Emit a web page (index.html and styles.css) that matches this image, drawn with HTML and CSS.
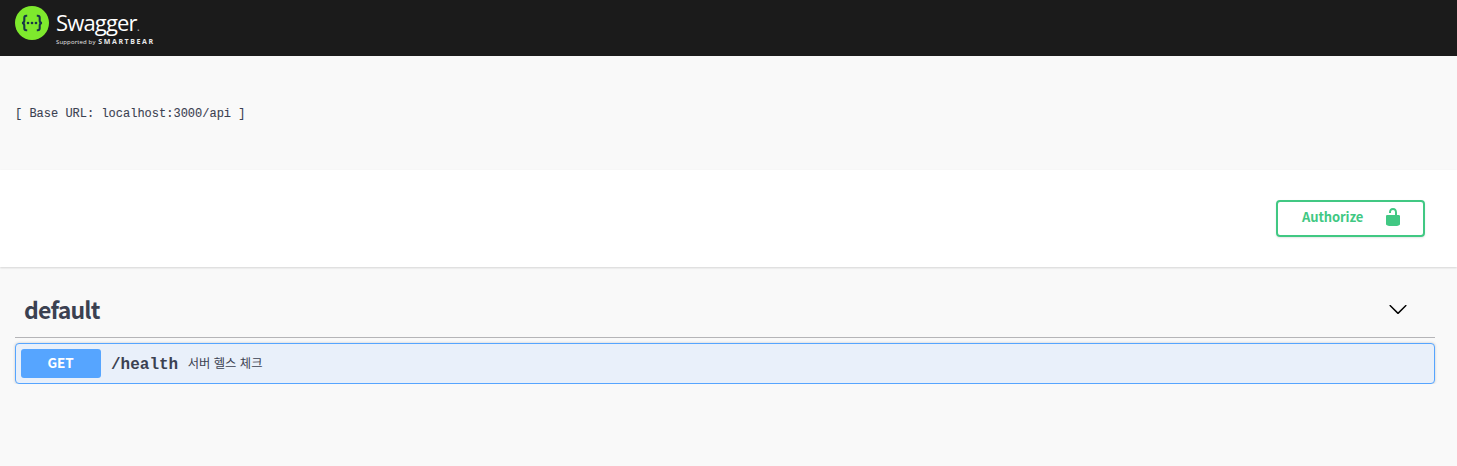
FILE: index.html
```html
<!DOCTYPE html>
<html lang="ko">
<head>
<meta charset="utf-8">
<title>Swagger UI</title>
<link rel="stylesheet" href="styles.css">
</head>
<body>
<header class="topbar">
  <svg class="logo-mark" viewBox="0 0 34 34">
    <circle cx="17" cy="17" r="17" fill="#7ee92d"/>
    <g fill="none" stroke="#173647" stroke-width="2.100">
      <path d="M12.200 9.700h-.900c-1.400 0-2 .7-2 2v2.700c0 1.600-.7 2.400-2.200 2.600 1.500.2 2.200 1 2.200 2.600v2.700c0 1.300.6 2 2 2h.900"/>
      <path d="M21.800 9.700h.900c1.400 0 2 .7 2 2v2.700c0 1.600.7 2.400 2.200 2.600-1.500.2-2.200 1-2.200 2.600v2.700c0 1.300-.6 2-2 2h-.900"/>
    </g>
    <g fill="#173647"><circle cx="13" cy="17" r="1.300"/><circle cx="17" cy="17" r="1.300"/><circle cx="21" cy="17" r="1.300"/></g>
  </svg>
  <div class="brand">
    <div class="brand-name">Swagger<span class="brand-dot">.</span></div>
    <div class="brand-sub">Supported by <b>SMARTBEAR</b></div>
  </div>
</header>
<section class="info"><pre class="base-url">[ Base URL: localhost:3000/api ]</pre></section>
<section class="schemes">
  <button class="authorize"><span>Authorize</span>
    <svg class="lock" viewBox="0 0 20 20"><path fill="#41c883" d="M15.800 8H14V5.600C14 2.703 12.665 1 10 1 7.334 1 6 2.703 6 5.600V6h2v-.801C8 3.754 8.797 3 10 3c1.203 0 2 .754 2 2.199V8H4c-.553 0-1 .646-1 1.199V17c0 .549.428 1.139.951 1.307l1.197.387C5.672 18.861 6.550 19 7.100 19h5.800c.549 0 1.428-.139 1.951-.307l1.196-.387c.524-.167.953-.757.953-1.306V9.199C17 8.646 16.352 8 15.800 8z"/></svg>
  </button>
</section>
<main class="operations">
  <div class="tag"><h3 class="tag-name">default</h3>
    <svg class="arrow" viewBox="0 0 20 20"><path d="M17.418 6.109c.272-.268.709-.268.979 0s.271.701 0 .969l-7.908 7.830c-.27.268-.707.268-.979 0l-7.908-7.830c-.27-.268-.27-.701 0-.969s.709-.268.979 0L10 13.250z"/></svg>
  </div>
  <div class="operation">
    <span class="method">GET</span><span class="path">/health</span><span class="summary">서버 헬스 체크</span>
  </div>
</main>
</body>
</html>
```
FILE: styles.css
```css
* { box-sizing: border-box; }
body { margin: 0; background: #f9f9f9; color: #3b4151; font-family: "Noto Sans CJK KR", sans-serif; }
.topbar { height: 56px; background: #1b1b1b; display: flex; align-items: flex-start; padding: 6px 15px; }
.logo-mark { width: 34px; height: 34px; }
.brand { margin-left: 7px; color: #fff; white-space: nowrap; font-family: "Open Sans", sans-serif; }
.brand-name { font-size: 22px; line-height: 30px; letter-spacing: -0.85px; margin-top: 1px; }
.brand-dot { font-size: 12px; color: #aaa; margin-left: 0; }
.brand-sub { font-size: 6px; line-height: 8px; letter-spacing: 0.15px; margin-top: -4px; color: #e8e8e8; }
.brand-sub b { font-size: 7px; font-weight: 700; letter-spacing: 1.600px; margin-left: 1px; }
.info { height: 114px; padding: 50px 15px 0; }
.base-url { margin: 0; font: 12px/16px "Liberation Mono", monospace; -webkit-text-stroke: 0.1px #3b4151; }
.schemes { height: 97px; background: #fff; box-shadow: 0 1px 2px rgba(0,0,0,.15); padding: 30px 32px 0; display: flex; justify-content: flex-end; align-items: flex-start; }
.authorize { width: 149px; height: 37px; border: 2px solid #41c883; border-radius: 4px; background: transparent; box-shadow: 0 1px 2px rgba(0,0,0,.1); color: #41c883; display: flex; align-items: center; justify-content: space-between; padding: 0 20px 3px 23px; font: 700 13px/20px "Noto Sans CJK KR", sans-serif; letter-spacing: -0.1px; }
.authorize span { margin-left: 1px; }
.lock { width: 20px; height: 20px; }
.operations { padding: 20px 22px 0 15px; }
.tag { height: 51px; border-bottom: 1px solid #b5b5b8; display: flex; align-items: center; justify-content: space-between; padding: 0 27px 6px 9px; }
.tag-name { margin: 0; font: 700 23px/32px "Noto Sans CJK KR", sans-serif; letter-spacing: -0.8px; }
.arrow { width: 20px; height: 20px; margin-top: -1px; }
.operation { height: 41px; margin-top: 5px; border: 1px solid #56a5ff; border-radius: 4px; background: #e9f0fa; box-shadow: 0 0 3px rgba(0,0,0,.19); display: flex; align-items: center; padding: 0 5px; }
.method { width: 80px; height: 29px; border-radius: 3px; background: #56a5ff; color: #fff; font: 700 13.500px/26px "Noto Sans CJK KR", sans-serif; letter-spacing: -0.2px; text-align: center; padding-right: 1px; }
.path { font: 700 16px/20px "Liberation Mono", monospace; margin: 2px 0 0 10px; }
.summary { font: 12.300px/20px "Noto Sans CJK KR", sans-serif; margin: -2px 0 0 9.500px; }
```
